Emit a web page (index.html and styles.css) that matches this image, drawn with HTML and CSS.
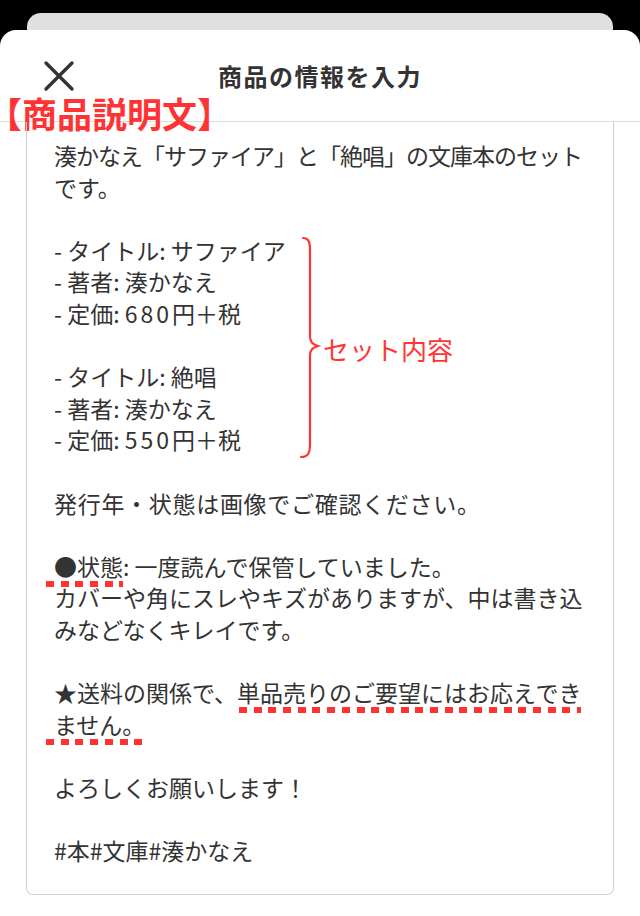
FILE: index.html
```html
<!DOCTYPE html>
<html lang="ja">
<head>
<meta charset="utf-8">
<title>商品の情報を入力</title>
<link rel="stylesheet" href="styles.css">
</head>
<body>
<div class="screen">
  <div class="backcard"></div>
  <div class="sheet">
    <div class="header">
      <div class="close">
        <svg width="32" height="32" viewBox="0 0 32 32"><path d="M3 3 L29 29 M29 3 L3 29" stroke="#333" stroke-width="3.4" stroke-linecap="round" fill="none"/></svg>
      </div>
      <div class="title">商品の情報を入力</div>
      <div></div>
    </div>
    <div class="label">【商品説明文】</div>
    <div class="box">
      <div class="line tight">湊かなえ「サファイア」と「絶唱」の文庫本のセット</div>
      <div class="line">です。</div>
      <div class="line blank"></div>
      <div class="line">- タイトル: サファイア</div>
      <div class="line">- 著者: 湊かなえ</div>
      <div class="line">- 定価: <span class="num">680</span>円＋税</div>
      <div class="line blank"></div>
      <div class="line">- タイトル: 絶唱</div>
      <div class="line">- 著者: 湊かなえ</div>
      <div class="line">- 定価: <span class="num">550</span>円＋税</div>
      <div class="line blank"></div>
      <div class="line wide">発行年・状態は画像でご確認ください。</div>
      <div class="line blank"></div>
      <div class="line"><span class="mark mark-lead">●状態</span>: 一度読んで保管していました。</div>
      <div class="line">カバーや角にスレやキズがありますが、中は書き込</div>
      <div class="line">みなどなくキレイです。</div>
      <div class="line blank"></div>
      <div class="line">★送料の関係で、<span class="mark">単品売りのご要望にはお応えでき</span></div>
      <div class="line"><span class="mark mark-lead">ません。</span></div>
      <div class="line blank"></div>
      <div class="line">よろしくお願いします！</div>
      <div class="line blank"></div>
      <div class="line">#本#文庫#湊かなえ</div>

      <div class="set-note">
        <svg class="brace" width="24" height="224" viewBox="0 0 24 224"><path d="M4 2 C9 2 11 5 11 14 L11 100 C11 106 13 108 19 110 C13 112 11 114 11 120 L11 208 C11 217 9 221 2 221" stroke="#ff3535" stroke-width="2.2" fill="none" stroke-linecap="round"/></svg>
        <span class="set-text">セット内容</span>
      </div>
    </div>
  </div>
</div>
</body>
</html>
```
FILE: styles.css
```css
html, body {
  margin: 0;
  padding: 0;
  background: #000;
}
.screen {
  width: 640px;
  height: 916px;
  overflow: hidden;
  background: #000;
  padding-top: 13px;
  box-sizing: border-box;
  display: flex;
  flex-direction: column;
  font-family: "Noto Sans CJK JP", "Noto Sans", sans-serif;
  color: #333;
}
.backcard {
  height: 17px;
  margin: 0 27px;
  background: #e0e0e0;
  border-radius: 14px 14px 0 0;
  flex: none;
}
.sheet {
  flex: 1;
  background: #fff;
  border-radius: 16px 16px 0 0;
  position: relative;
  display: flex;
  flex-direction: column;
}
.header {
  height: 91px;
  border-bottom: 1px solid #dcdcdc;
  display: grid;
  grid-template-columns: 1fr auto 1fr;
  align-items: center;
  flex: none;
}
.close {
  padding-left: 43px;
  display: flex;
  align-items: center;
}
.close svg { display: block; }
.title {
  font-size: 24px;
  font-weight: 700;
  letter-spacing: 1.5px;
  color: #333;
}
.label {
  position: absolute;
  left: -13px;
  top: 62px;
  font-size: 35px;
  font-weight: 700;
  color: #ff3333;
  line-height: 42px;
  letter-spacing: 0;
}
.box {
  position: relative;
  margin: 0 26px 21px 26px;
  border: 1.5px solid #cfcfcf;
  border-top: none;
  border-radius: 0 0 7px 7px;
  padding: 18px 10px 22px 27px;
  flex: 1;
}
.line {
  font-size: 23px;
  line-height: 31.6px;
  height: 31.6px;
  white-space: pre;
}
.tight { letter-spacing: -1px; }
.wide { letter-spacing: 0.7px; }
.num { letter-spacing: 3px; }
.mark {
  position: relative;
}
.mark::after {
  content: "";
  position: absolute;
  left: 2px;
  right: 0;
  bottom: -4px;
  height: 6px;
  background: repeating-linear-gradient(90deg, #ff3333 0 8px, transparent 8px 14.7px);
}
.mark-lead::after {
  left: -8px;
}
.set-note {
  position: absolute;
  left: 272px;
  top: 114px;
  display: flex;
  align-items: center;
}
.brace { display: block; }
.set-text {
  font-size: 26px;
  color: #ff3535;
}
```
